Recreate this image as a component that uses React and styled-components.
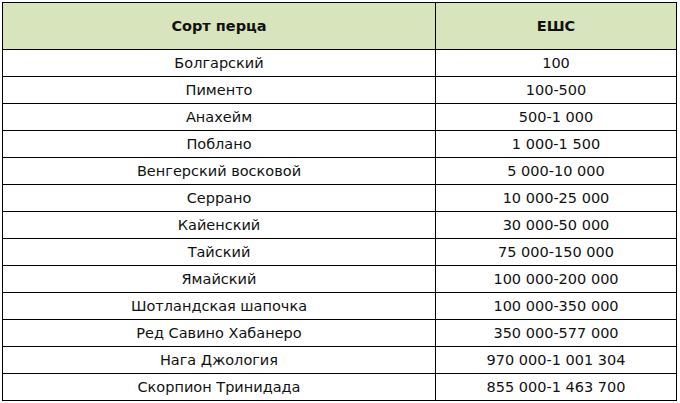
import React from 'react';
import styled, { createGlobalStyle } from 'styled-components';

const GlobalStyle = createGlobalStyle`
    html, body {
        margin: 0;
        padding: 0;
        background: #ffffff;
    }
    body {
        font-family: "DejaVu Sans", Verdana, sans-serif;
    }
`;

const StyledWrapper = styled.div`
    padding: 2px 3px 1px 2px;
    width: 680px;
    box-sizing: border-box;
`;

const Table = styled.table`
    border-collapse: collapse;
    width: 675px;
    table-layout: fixed;
    color: #111;
    font-size: 14.5px;

    td, th {
        border: 1px solid #000;
        padding: 0;
        text-align: center;
    }

    th:first-child, td:first-child {
        width: 432px;
    }

    th {
        background-color: #d8e4bc;
        height: 46px;
        font-weight: bold;
    }

    td {
        height: 26px;
    }
`;

const peppers = [
    ['Болгарский', '100'],
    ['Пименто', '100-500'],
    ['Анахейм', '500-1 000'],
    ['Поблано', '1 000-1 500'],
    ['Венгерский восковой', '5 000-10 000'],
    ['Серрано', '10 000-25 000'],
    ['Кайенский', '30 000-50 000'],
    ['Тайский', '75 000-150 000'],
    ['Ямайский', '100 000-200 000'],
    ['Шотландская шапочка', '100 000-350 000'],
    ['Ред Савино Хабанеро', '350 000-577 000'],
    ['Нага Джология', '970 000-1 001 304'],
    ['Скорпион Тринидада', '855 000-1 463 700'],
];

const App = () => (
    <StyledWrapper>
        <GlobalStyle />
        <Table>
            <thead>
                <tr>
                    <th>Сорт перца</th>
                    <th>ЕШС</th>
                </tr>
            </thead>
            <tbody>
                {peppers.map(([name, shu]) => (
                    <tr key={name}>
                        <td>{name}</td>
                        <td>{shu}</td>
                    </tr>
                ))}
            </tbody>
        </Table>
    </StyledWrapper>
);

export default App;
